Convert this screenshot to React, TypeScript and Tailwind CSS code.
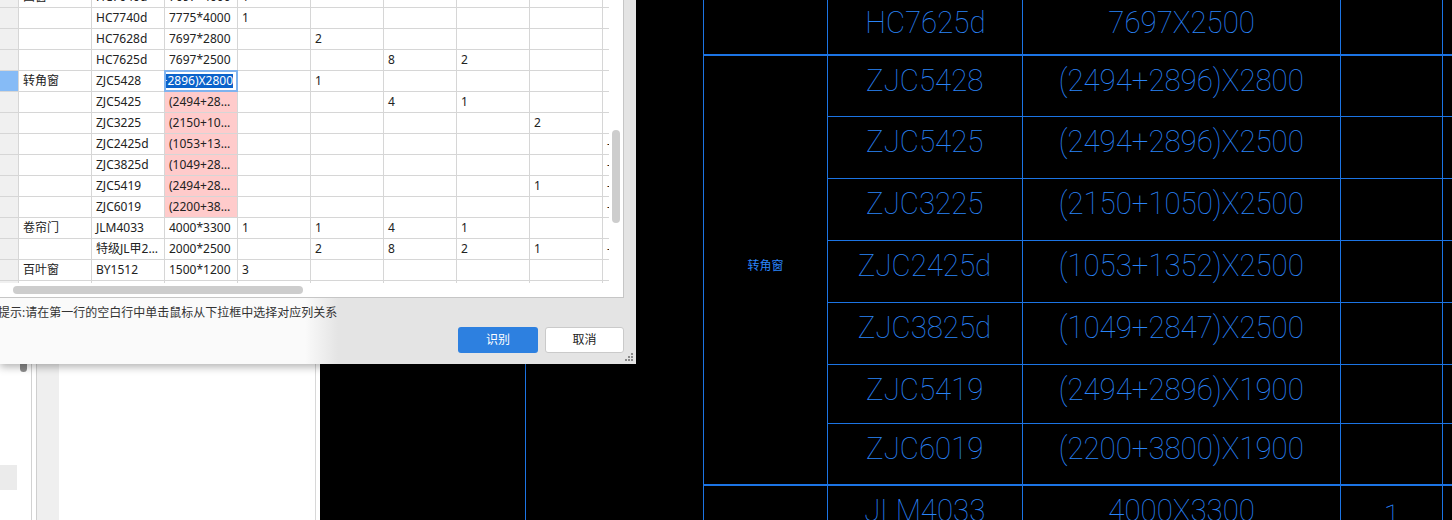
import React from 'react';

type Row = {
  cat?: string;
  code: string;
  size: string;
  counts?: string[];
  pink?: boolean;
  dash?: boolean;
  selected?: boolean;
  editing?: boolean;
};

const rows: Row[] = [
  { cat: '凸窗', code: 'HC7640d', size: '7697*4000', counts: ['1'] },
  { code: 'HC7740d', size: '7775*4000', counts: ['1'] },
  { code: 'HC7628d', size: '7697*2800', counts: ['', '2'] },
  { code: 'HC7625d', size: '7697*2500', counts: ['', '', '8', '2'] },
  { cat: '转角窗', code: 'ZJC5428', size: '(2494+2896)X2800', counts: ['', '1'], selected: true, editing: true },
  { code: 'ZJC5425', size: '(2494+2896)X2500', counts: ['', '', '4', '1'], pink: true },
  { code: 'ZJC3225', size: '(2150+1050)X2500', counts: ['', '', '', '', '2'], pink: true },
  { code: 'ZJC2425d', size: '(1053+1352)X2500', pink: true, dash: true },
  { code: 'ZJC3825d', size: '(1049+2847)X2500', pink: true, dash: true },
  { code: 'ZJC5419', size: '(2494+2896)X1900', counts: ['', '', '', '', '1'], pink: true, dash: true },
  { code: 'ZJC6019', size: '(2200+3800)X1900', pink: true, dash: true },
  { cat: '卷帘门', code: 'JLM4033', size: '4000*3300', counts: ['1', '1', '4', '1'] },
  { code: '特级JL甲2018', size: '2000*2500', counts: ['', '2', '8', '2', '1'], dash: true },
  { cat: '百叶窗', code: 'BY1512', size: '1500*1200', counts: ['3'] },
  { code: 'BY1209', size: '1200*900', counts: [] },
];

const cell = 'border-r border-[#d6d6d6] px-[4px] truncate';

const GridRow: React.FC<{ row: Row }> = ({ row }) => {
  const counts = Array.from({ length: 5 }).map((_, i) => row.counts?.[i] ?? '');
  return (
    <div className="grid grid-cols-[19px_repeat(8,73px)_6px] h-[21px] leading-[20px] border-b border-[#d6d6d6]">
      <div className={['border-r border-[#d6d6d6]', row.selected ? 'bg-[#86bbf6]' : 'bg-[#f0f0f0]'].join(' ')} />
      <div className={cell}>{row.cat}</div>
      <div className={cell}>{row.code}</div>
      {row.editing ? (
        <div className="relative border-r border-[#d6d6d6]">
          <div className="absolute -top-px -left-px -right-px -bottom-px border-2 border-[#80b3ee] bg-white flex items-center justify-end overflow-hidden pr-[3px]">
            <span className="bg-[#0b63cb] text-white whitespace-nowrap leading-[14px]">{row.size}</span>
          </div>
        </div>
      ) : (
        <div className={[cell, row.pink ? 'bg-[#ffcbcb]' : ''].join(' ')}>{row.size}</div>
      )}
      {counts.map((c, i) => (
        <div key={i} className={cell}>{c}</div>
      ))}
      <div className="pl-[4px] whitespace-nowrap">{row.dash ? '-' : ''}</div>
    </div>
  );
};

const cadText = "inline-block font-['Roboto',sans-serif] font-thin text-[32px] leading-[32px] text-[#2a84f8] scale-x-[0.92] whitespace-nowrap";
const cadLine = 'border-[#1c74e4]';

const CadRow: React.FC<{ h: string; code: string; size: string; qty?: string; first?: boolean }> = ({ h, code, size, qty, first }) => (
  <div className={['flex', h, first ? '' : 'border-t', cadLine].join(' ')}>
    <div className={['w-[195px] border-r flex justify-center pt-[8px]', cadLine].join(' ')}>
      <span className={cadText}>{code}</span>
    </div>
    <div className={['w-[318px] border-r flex justify-center pt-[8px]', cadLine].join(' ')}>
      <span className={cadText}>{size}</span>
    </div>
    <div className={['w-[102px] border-r flex justify-center pt-[14px]', cadLine].join(' ')}>
      <span className={cadText}>{qty}</span>
    </div>
    <div className="w-[100px]" />
  </div>
);

const cornerRows = [
  { h: 'h-[60px]', code: 'ZJC5428', size: '(2494+2896)X2800' },
  { h: 'h-[62px]', code: 'ZJC5425', size: '(2494+2896)X2500' },
  { h: 'h-[62px]', code: 'ZJC3225', size: '(2150+1050)X2500' },
  { h: 'h-[62px]', code: 'ZJC2425d', size: '(1053+1352)X2500' },
  { h: 'h-[62px]', code: 'ZJC3825d', size: '(1049+2847)X2500' },
  { h: 'h-[59px]', code: 'ZJC5419', size: '(2494+2896)X1900' },
  { h: 'h-[61px]', code: 'ZJC6019', size: '(2200+3800)X1900' },
];

export default function App() {
  return (
    <div className="relative w-[1452px] h-[520px] overflow-hidden flex font-['Noto_Sans','Noto_Sans_CJK_SC',sans-serif] text-[12px] text-[#222]">
      {/* window behind the dialog */}
      <div className="w-[320px] h-full bg-white flex">
        <div className="w-[31px] flex flex-col">
          <div className="h-[357px]" />
          <div className="ml-[20px] w-[7px] h-[15px] rounded-full bg-[#8c8c8c]" />
          <div className="mt-[93px] w-[17px] h-[25px] bg-[#ebebeb]" />
        </div>
        <div className="w-px bg-[#d2d2d2]" />
        <div className="w-[4px]" />
        <div className="w-[23px] bg-[#efefef] border-l border-[#cfcfcf]" />
        <div className="flex-1" />
        <div className="w-px bg-[#d8d8d8]" />
        <div className="w-[4px]" />
      </div>

      {/* CAD canvas */}
      <div className="relative flex-1 h-full bg-black">
        <div className="absolute left-[205px] top-0 h-full w-px bg-[#1c74e4]" />
        <div className={['absolute left-[383px] top-[-2px] border-l', cadLine].join(' ')}>
          <div className="flex">
            <div className={['w-[124px] border-r', cadLine].join(' ')} />
            <div>
              <CadRow h="h-[56px]" code="HC7625d" size="7697X2500" first />
            </div>
          </div>
          <div className={['flex border-t-2', cadLine].join(' ')}>
            <div className={['w-[124px] border-r flex items-center justify-center pb-[10px]', cadLine].join(' ')}>
              <span className="text-[12px] text-[#2a84f8] font-['Noto_Sans_CJK_SC',sans-serif]">转角窗</span>
            </div>
            <div>
              {cornerRows.map((r, i) => (
                <CadRow key={r.code} h={r.h} code={r.code} size={r.size} first={i === 0} />
              ))}
            </div>
          </div>
          <div className={['flex border-t-2', cadLine].join(' ')}>
            <div className={['w-[124px] border-r', cadLine].join(' ')} />
            <div>
              <CadRow h="h-[62px]" code="JLM4033" size="4000X3300" qty="1" first />
            </div>
          </div>
        </div>
      </div>

      {/* dialog */}
      <div className="absolute left-0 top-0 w-[636px] h-[364px] flex flex-col bg-[linear-gradient(to_right,#fafafa_0px,#fafafa_305px,#e4e4e4_338px)] shadow-[0_3px_8px_rgba(0,0,0,0.3)]">
        <div className="w-[624px] h-[298px] bg-white border-r border-b border-[#c6c6c6] flex">
          <div className="w-[609px] flex flex-col">
            <div className="h-[283px] overflow-hidden">
              <div className="-mt-[13px]">
                {rows.map((r, i) => (
                  <GridRow key={i} row={r} />
                ))}
              </div>
            </div>
            <div className="flex-1 pl-[13px] pt-[3px]">
              <div className="w-[290px] h-[8px] rounded-full bg-[#cdcdcd]" />
            </div>
          </div>
          <div className="flex-1 pl-[3px] pt-[130px]">
            <div className="w-[8px] h-[93px] rounded-full bg-[#cdcdcd]" />
          </div>
        </div>
        <div className="mt-[6px] -ml-[2px] leading-[17px] text-[#333] whitespace-nowrap">
          提示:请在第一行的空白行中单击鼠标从下拉框中选择对应列关系
        </div>
        <div className="mt-[6px] flex justify-end gap-[7px] pr-[12px]">
          <button className="w-[80px] h-[26px] rounded-[3px] bg-[#2d80e0] text-white text-[12px]">识别</button>
          <button className="w-[79px] h-[26px] rounded-[3px] bg-white border border-[#cacaca] text-[#222] text-[12px]">取消</button>
        </div>
        <svg className="absolute right-[3px] bottom-[3px]" width="8" height="8" viewBox="0 0 8 8">
          <rect x="6" y="0" width="2" height="2" fill="#8a8a8a" />
          <rect x="3" y="3" width="2" height="2" fill="#8a8a8a" />
          <rect x="6" y="3" width="2" height="2" fill="#8a8a8a" />
          <rect x="0" y="6" width="2" height="2" fill="#8a8a8a" />
          <rect x="3" y="6" width="2" height="2" fill="#8a8a8a" />
          <rect x="6" y="6" width="2" height="2" fill="#8a8a8a" />
        </svg>
      </div>
    </div>
  );
}
